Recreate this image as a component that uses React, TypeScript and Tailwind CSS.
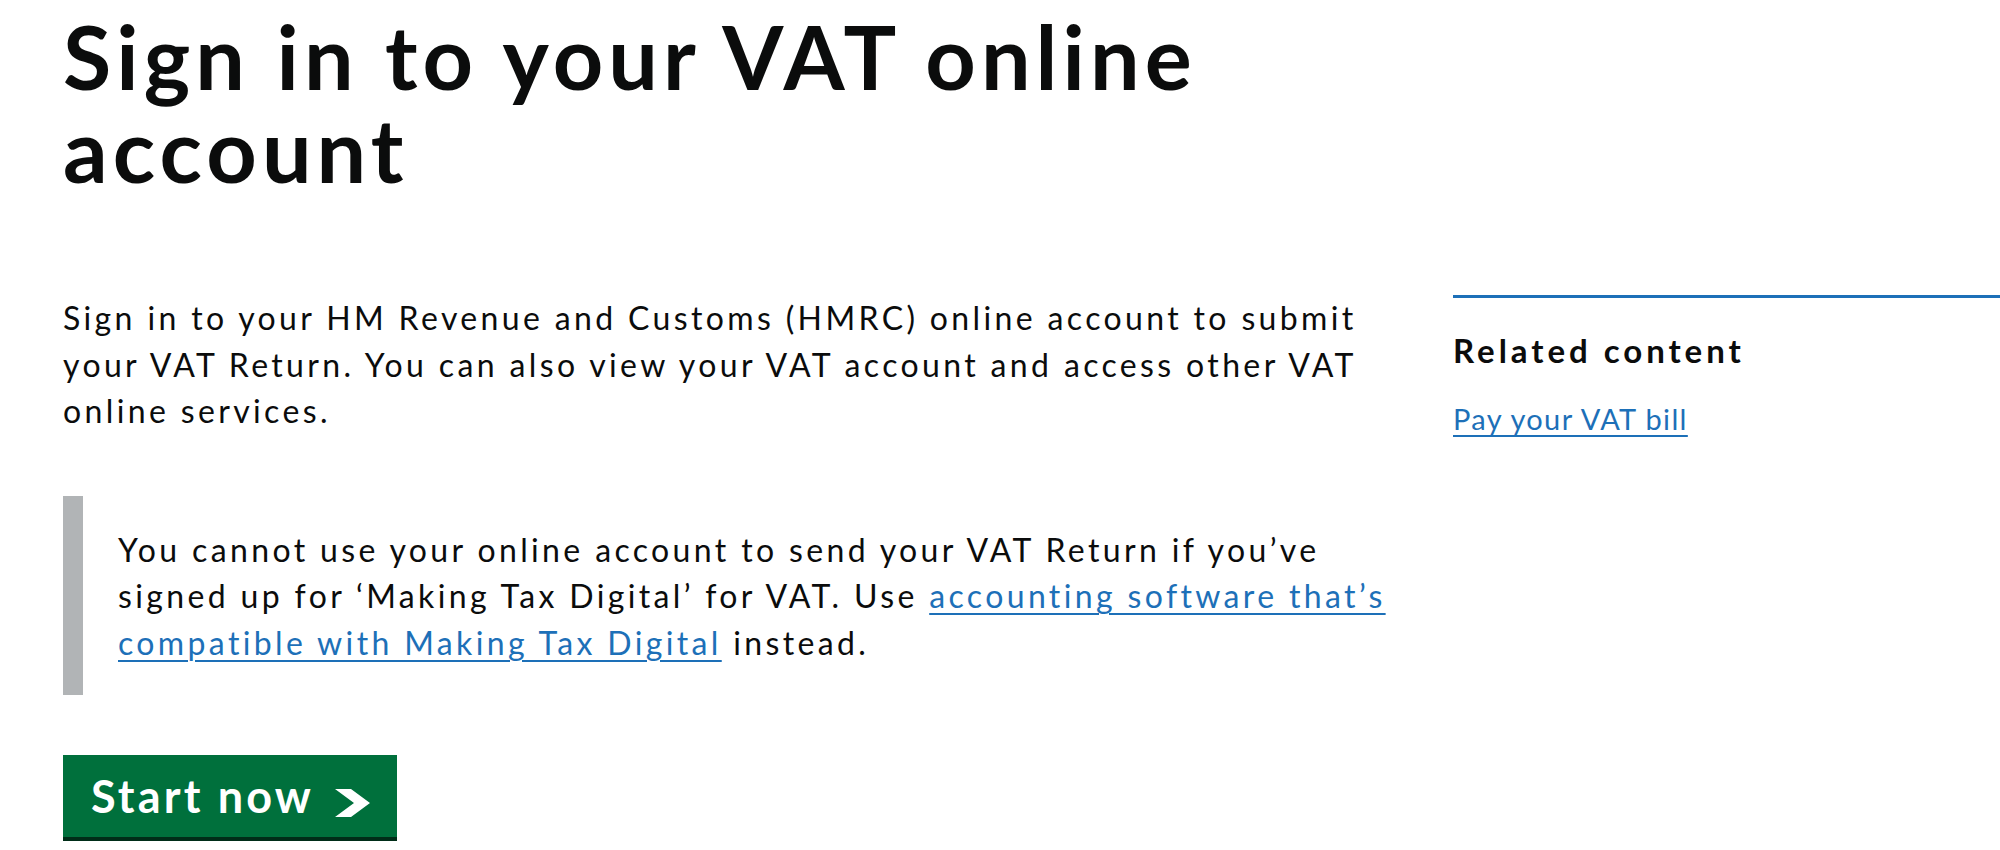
import { type ReactNode } from "react";

function Chevron() {
    return (
        <svg viewBox="0 0 35 28" className="w-[35px] h-[28px] fill-white" aria-hidden="true">
            <polygon points="0,0 16,0 35,14 16,28 0,28 19,14" />
        </svg>
    );
}

function Link({ children }: { children: ReactNode }) {
    return (
        <a
            href="#"
            className="text-[#1d70b8] underline decoration-[2px] underline-offset-[5px] hover:text-[#003078]"
        >
            {children}
        </a>
    );
}

export default function App() {
    return (
        <main className="min-h-screen bg-white font-['Lato',sans-serif] text-[#0b0c0c] pl-[63px] pt-[10px]">
            <h1 className="text-[88px] leading-[93px] font-bold tracking-[0.058em] w-[1250px] mb-[99px]">
                Sign in to your VAT online account
            </h1>

            <div className="flex">
                {/* main column */}
                <div className="w-[1332px] shrink-0">
                    <p className="text-[32px] leading-[46.5px] tracking-[0.105em]">
                        Sign in to your HM Revenue and Customs (HMRC) online account to submit your VAT
                        Return. You can also view your VAT account and access other VAT online services.
                    </p>

                    <div className="mt-[61px] border-l-[20px] border-[#b1b4b6] pl-[35px] pt-[31px] pb-[29px]">
                        <p className="text-[32px] leading-[46.5px] tracking-[0.105em]">
                            You cannot use your online account to send your VAT Return if you’ve signed up
                            for ‘Making Tax Digital’ for VAT. Use{" "}
                            <Link>accounting software that’s compatible with Making Tax Digital</Link>{" "}
                            instead.
                        </p>
                    </div>

                    <a
                        href="#"
                        className="mt-[60px] inline-flex items-center h-[82px] pl-[28px] pr-[27px] gap-[21px] bg-[#00703c] shadow-[0_4px_0_#002d18] text-white"
                    >
                        <span className="text-[45px] leading-none font-bold tracking-[0.07em]">Start now</span>
                        <span className="mt-[14px]">
                            <Chevron />
                        </span>
                    </a>
                </div>

                {/* related links */}
                <aside className="flex-1 ml-[58px]">
                    <div className="border-t-[3px] border-[#1d70b8] pt-[32px]">
                        <h2 className="text-[33px] leading-[40px] font-bold tracking-[0.12em]">
                            Related content
                        </h2>
                        <nav className="mt-[31px] text-[29px] leading-[35px] tracking-[0.047em]">
                            <Link>Pay your VAT bill</Link>
                        </nav>
                    </div>
                </aside>
            </div>
        </main>
    );
}
